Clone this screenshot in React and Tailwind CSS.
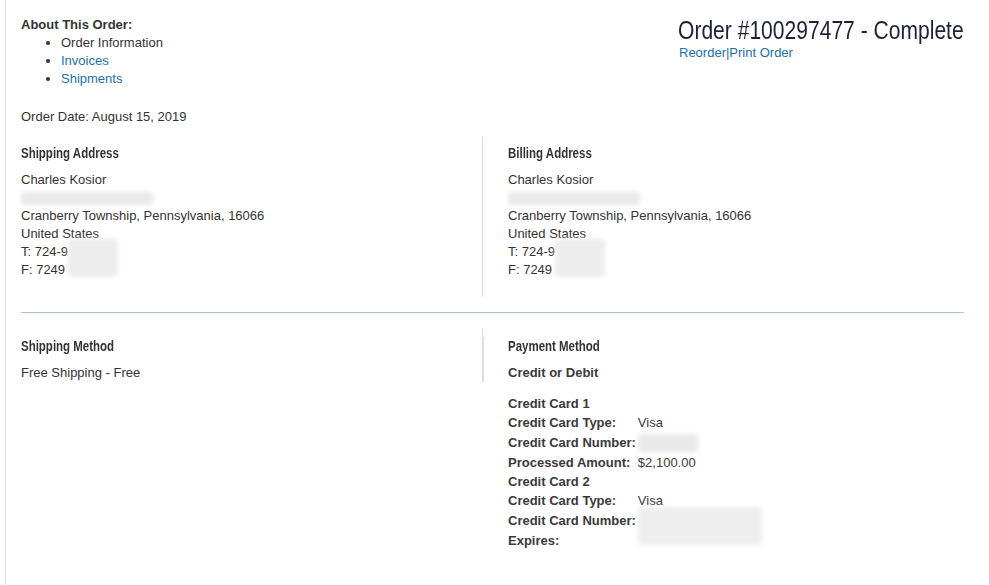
// Page de détail d'une commande (compte client)
// Arial Narrow n'est pas installée : on resserre Liberation Sans à 82 %
const narrowClass = 'inline-block scale-x-[0.82]'

function Blur({ className }) {
  return <span className={`block rounded-sm bg-[#e9e9e9] blur-[2px] ${className}`} />
}

function SectionTitle({ children }) {
  return (
    <h3 className="mb-[9px] text-[14px] font-bold leading-[18px] text-[#333]">
      <span className={`${narrowClass} origin-left`}>{children}</span>
    </h3>
  )
}

function Address({ title }) {
  return (
    <div>
      <SectionTitle>{title}</SectionTitle>
      <p>Charles Kosior</p>
      <div className="flex h-[18px] items-center">
        <Blur className="h-[13px] w-[132px] bg-[#e2e2e2]" />
      </div>
      <p>Cranberry Township, Pennsylvania, 16066</p>
      <p>United States</p>
      <div className="relative">
        <p>T: 724-9</p>
        <p>F: 7249</p>
        <Blur className="absolute left-[47px] top-[-4px] h-[38px] w-[50px] bg-[#ededed]" />
      </div>
    </div>
  )
}

function CardRow({ label, value, blur }) {
  return (
    <tr className="h-[20px]">
      <th className="pr-[2px] text-left font-bold">{label}</th>
      <td className="relative">
        {value}
        {blur}
      </td>
    </tr>
  )
}

export default function App() {
  return (
    <div className="min-h-[585px] bg-white">
      <div
        className="ml-[5px] min-h-[585px] border-l border-[#e2e2e2] pb-8 pl-[15px] pr-[25px] pt-[16px] text-[13px] leading-[18px] text-[#333]"
        style={{ fontFamily: '"Liberation Sans", Arial, sans-serif' }}
      >
        <div className="flex items-start justify-between">
          <div>
            <p className="font-bold">About This Order:</p>
            <ul className="list-disc pl-[40px]">
              <li>Order Information</li>
              <li><a className="text-[#1a6fb0]" href="#">Invoices</a></li>
              <li><a className="text-[#1a6fb0]" href="#">Shipments</a></li>
            </ul>
            <p className="mt-5">Order Date: August 15, 2019</p>
          </div>
          <div className="flex flex-col items-end">
            <h1 className="whitespace-nowrap text-[26px] leading-[28px] text-[#1c2039]">
              <span className="inline-block origin-right scale-x-[0.81]">Order #100297477 - Complete</span>
            </h1>
            <p className="w-[285px] text-[#1a6fb0]">
              <a href="#">Reorder</a>|<a href="#">Print Order</a>
            </p>
          </div>
        </div>

        <div className="mt-[11px] flex items-stretch">
          <div className="w-[462px] border-r border-[#dedede] pb-[18px] pt-[7px]">
            <Address title="Shipping Address" />
          </div>
          <div className="flex-1 pl-[25px] pt-[7px]">
            <Address title="Billing Address" />
          </div>
        </div>

        <hr className="mt-[15px] border-0 border-t border-[#a9c9c4]" />

        <div className="mt-4 flex items-start">
          <div className="w-[462px] border-r border-[#dedede] pt-[8px]">
            <SectionTitle>Shipping Method</SectionTitle>
            <p>Free Shipping - Free</p>
          </div>
          <div className="flex-1 pl-[25px] pt-[8px]">
            <div className="-ml-[25px] border-l border-[#dedede] pl-[24px]">
              <SectionTitle>Payment Method</SectionTitle>
              <p className="font-bold text-[#3a3a3a]">Credit or Debit</p>
            </div>
            <div className="mt-[13px] text-[#3a3a3a]">
              <p className="font-bold">Credit Card 1</p>
              <table className="border-separate border-spacing-0">
                <tbody>
                  <CardRow label="Credit Card Type:" value="Visa" />
                  <CardRow label="Credit Card Number:" blur={<Blur className="absolute left-0 top-[1px] h-[18px] w-[60px]" />} />
                  <CardRow label="Processed Amount:" value="$2,100.00" />
                </tbody>
              </table>
              <p className="font-bold">Credit Card 2</p>
              <table className="border-separate border-spacing-0">
                <tbody>
                  <CardRow label="Credit Card Type:" value="Visa" />
                  <CardRow label="Credit Card Number:" blur={<Blur className="absolute left-0 top-[-4px] h-[38px] w-[124px] bg-[#eeeeee]" />} />
                  <CardRow label="Expires:" />
                </tbody>
              </table>
            </div>
          </div>
        </div>
      </div>
    </div>
  )
}
